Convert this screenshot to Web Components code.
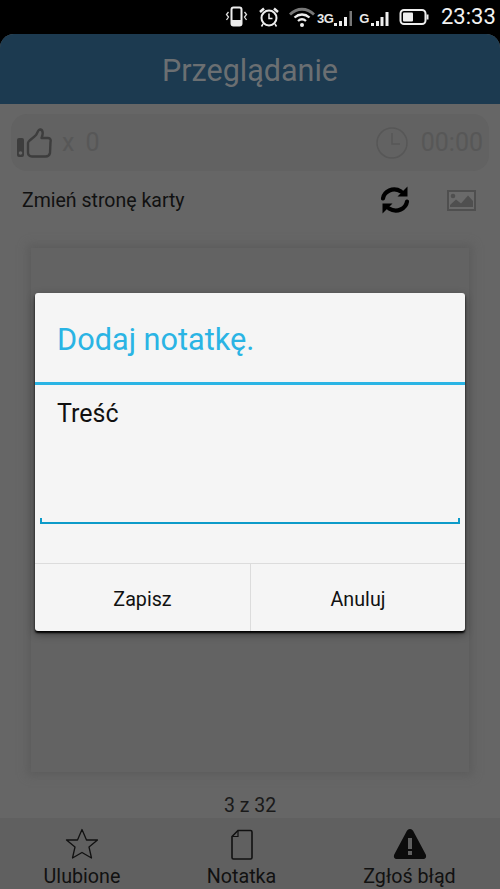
<!DOCTYPE html>
<html lang="pl">
<head>
<meta charset="utf-8">
<title>Przeglądanie</title>
<style>
html, body { margin: 0; padding: 0; width: 500px; height: 889px; overflow: hidden; background: #000; }
body { font-family: Roboto, "Noto Sans", sans-serif; }
</style>
</head>
<body>
<study-screen>
  <status-bar time="23:33"></status-bar>
  <title-bar>Przeglądanie</title-bar>
  <info-bar></info-bar>
  <side-row>Zmień stronę karty</side-row>
  <flash-card></flash-card>
  <page-count>3 z 32</page-count>
  <bottom-nav></bottom-nav>
  <note-dialog heading="Dodaj notatkę." placeholder="Treść" save="Zapisz" cancel="Anuluj"></note-dialog>
</study-screen>

<script>
// small helper so every element does the same shadow setup
function shadow(el, html) {
    const root = el.attachShadow({ mode: 'open' });
    const template = document.createElement('template');
    template.innerHTML = html;
    root.appendChild(template.content.cloneNode(true));
    return root;
}

class StudyScreen extends HTMLElement {
    connectedCallback() {
        shadow(this, `
            <style>
                :host{display: flex; flex-direction: column; position: relative; width: 500px; height: 889px; background: #000; overflow: hidden;}
                .page{flex: 1; display: flex; flex-direction: column; min-height: 0; background: #666; border-radius: 14px 14px 0 0;}
            </style>
            <slot name="top"></slot>
            <div class="page"><slot></slot></div>
        `);
        this.querySelector('status-bar').slot = 'top';
    }
}

class StatusBar extends HTMLElement {
    connectedCallback() {
        shadow(this, `
            <style>
                :host{display: flex; align-items: center; height: 34px; flex: none; background: #000; color: #eee; position: relative;}
                svg{display: block; flex: none;}
                .icons{display: flex; align-items: center; margin-left: 225px; height: 34px;}
                .time{margin-left: 12px; font: 400 22px/34px Roboto, sans-serif; color: #f2f2f2;}
                .net{font: 700 13px/13px "Liberation Sans", sans-serif; color: #e8e8e8; letter-spacing: -0.5px; margin-top: 3px;}
            </style>
            <div class="icons">
                <svg width="23" height="22" viewBox="0 0 23 22" style="margin-right:10px">
                    <rect x="6.500" y="1.500" width="10" height="18" rx="2" fill="none" stroke="#eee" stroke-width="2"/>
                    <rect x="7" y="14" width="9" height="5" fill="#eee"/>
                    <path d="M3.500 6 1.500 8.500 3.500 11 1.500 14M19.500 6 21.500 8.500 19.500 11 21.500 14" fill="none" stroke="#ddd" stroke-width="1.300"/>
                </svg>
                <svg width="22" height="22" viewBox="0 0 22 22" style="margin-right:9px">
                    <circle cx="11" cy="12" r="7.500" fill="none" stroke="#eee" stroke-width="2"/>
                    <path d="M11 7.500V12.500H14.500" fill="none" stroke="#eee" stroke-width="1.500"/>
                    <path d="M2 6 6 2.500M20 6 16 2.500" stroke="#eee" stroke-width="2.500"/>
                    <path d="M5 18 3.500 20.500M17 18 18.500 20.500" stroke="#eee" stroke-width="1.500"/>
                </svg>
                <svg width="26" height="22" viewBox="0 0 26 22">
                    <path d="M1 8.500C8 1.500 18 1.500 25 8.500" fill="none" stroke="#777" stroke-width="2.800"/>
                    <path d="M5.500 11.500C10 7.500 16 7.500 20.500 11.500" fill="none" stroke="#eee" stroke-width="2.300"/>
                    <path d="M9 15C11.500 12.800 14.500 12.800 17 15" fill="none" stroke="#eee" stroke-width="2.300"/>
                    <circle cx="13" cy="19" r="2" fill="#eee"/>
                </svg>
                <span class="net" style="margin-left:2px">3G</span>
                <svg width="21" height="22" viewBox="0 0 21 22">
                    <path d="M1 17h3v3H1zM6 15h3v5H6zM11 11h3v9h-3z" fill="#eee"/>
                    <path d="M16.500 5h2.500v15h-2.500z" fill="#777"/>
                </svg>
                <span class="net" style="margin-left:5px">G</span>
                <svg width="21" height="22" viewBox="0 0 21 22" style="margin-left:1px">
                    <path d="M1 17h3v3H1zM6 15h3v5H6zM10.500 11h3v9h-3zM15.500 6h3v14h-3z" fill="#eee"/>
                </svg>
                <svg width="30" height="20" viewBox="0 0 30 20" style="margin-left:8px">
                    <rect x="1.500" y="3" width="25" height="14" rx="3.500" fill="none" stroke="#eee" stroke-width="2"/>
                    <rect x="4" y="5.500" width="10" height="9" rx="1" fill="#eee"/>
                    <rect x="27.500" y="7.500" width="2" height="5" fill="#eee"/>
                </svg>
                <span class="time">${this.getAttribute('time')}</span>
            </div>
        `);
    }
}

class TitleBar extends HTMLElement {
    connectedCallback() {
        shadow(this, `
            <style>
                :host{display: flex; flex: none; align-items: center; justify-content: center; height: 70px; box-sizing: border-box; padding-top: 3px; background: #1c3a50; border-radius: 14px 14px 0 0; color: #6b6f72; font: 400 30.5px Roboto, sans-serif;}
            </style>
            <slot></slot>
        `);
    }
}

class InfoBar extends HTMLElement {
    connectedCallback() {
        shadow(this, `
            <style>
                :host{display: flex; flex: none; align-items: center; height: 57px; margin: 10px 11px 0; padding: 0 6px 0 6px; background: #626262; border-radius: 16px; color: #575757; font: 400 25px Roboto, sans-serif; box-sizing: border-box;}
                svg{display: block; flex: none;}
                .likes{margin-left: 9px;}
                .x{margin-right: 11px;}
                .spacer{flex: 1;}
                .time{margin-left: 13px;}
            </style>
            <svg width="36" height="30" viewBox="0 0 36 30">
                <rect x="0" y="10" width="7" height="19" rx="2" fill="#3d3d3d"/>
                <circle cx="3.500" cy="25" r="1.800" fill="#666"/>
                <path d="M11 15C11 12.500 16 10.500 19 7C20.500 5 21 1 23.500 1.500C27 2.500 25.500 8 24.500 10H31C33.500 10 34 12 33.500 14L33 25C32.500 27.500 31 28.500 28.500 28.500H15C12.500 28.500 11 27 11 24.500Z" fill="none" stroke="#3d3d3d" stroke-width="2.400" stroke-linejoin="round"/>
            </svg>
            <span class="likes x">x</span><span>0</span>
            <span class="spacer"></span>
            <svg width="32" height="32" viewBox="0 0 32 32">
                <circle cx="16" cy="16" r="15" fill="none" stroke="#575757" stroke-width="1.500"/>
                <path d="M16 6V17H24" fill="none" stroke="#575757" stroke-width="1.500"/>
            </svg>
            <span class="time">00:00</span>
        `);
    }
}

class SideRow extends HTMLElement {
    connectedCallback() {
        shadow(this, `
            <style>
                :host{display: flex; flex: none; align-items: center; height: 58px; padding: 0 24px 0 22px; color: #111; font: 400 19.500px Roboto, sans-serif;}
                svg{display: block; flex: none;}
                .label{flex: 1;}
                .flip{margin-right: 37px;}
            </style>
            <span class="label"><slot></slot></span>
            <svg class="flip" width="30" height="30" viewBox="0 0 30 30">
                <path d="M3 13.500C4 6.500 13 1.500 21 6.500" fill="none" stroke="#000" stroke-width="4.200" stroke-linecap="round"/>
                <path d="M27 16.500C26 23.500 17 28.500 9 23.500" fill="none" stroke="#000" stroke-width="4.200" stroke-linecap="round"/>
                <path d="M27.500 1.500V11.500H17.500Z" fill="#000"/>
                <path d="M2.500 28.500V18.500H12.500Z" fill="#000"/>
            </svg>
            <svg width="29" height="21" viewBox="0 0 29 21">
                <rect x="0" y="0" width="29" height="21" fill="#4f4f4f"/>
                <rect x="2" y="2" width="25" height="17" fill="#6a6a6a"/>
                <circle cx="6" cy="6" r="2.300" fill="#4f4f4f"/>
                <path d="M3 17V15L9 9.500 14 13.500 21 5.500 26 11V17Z" fill="#4f4f4f"/>
            </svg>
        `);
    }
}

class FlashCard extends HTMLElement {
    connectedCallback() {
        shadow(this, `
            <style>
                :host{display: block; flex: none; height: 524px; margin: 19px 31px 0; background: #636363; box-shadow: 0 0 9px 3px #5c5c5c;}
            </style>
        `);
    }
}

class PageCount extends HTMLElement {
    connectedCallback() {
        shadow(this, `
            <style>
                :host{display: flex; flex: none; align-items: center; justify-content: center; height: 46px; box-sizing: border-box; padding-top: 20px; color: #1a1a1a; font: 400 19.500px Roboto, sans-serif;}
            </style>
            <slot></slot>
        `);
    }
}

class BottomNav extends HTMLElement {
    connectedCallback() {
        shadow(this, `
            <style>
                :host{display: grid; grid-template-columns: 164px 155px 181px; flex: 1; background: #606060; color: #111; font: 400 19.700px/22px Roboto, sans-serif;}
                .item{display: flex; flex-direction: column; align-items: center; padding-top: 10px;}
                svg{display: block; height: 32px;}
                span{margin-top: 6px; white-space: nowrap;}
            </style>
            <div class="item">
                <svg width="34" height="32" viewBox="0 0 34 32">
                    <path d="M17 1.500 21.500 12H32.500L24 19 26.500 30 17 24.500 7.500 30 10 19 1.500 12H12.500Z" fill="none" stroke="#111" stroke-width="1.300" stroke-linejoin="round"/>
                </svg>
                <span>Ulubione</span>
            </div>
            <div class="item">
                <svg width="24" height="32" viewBox="0 0 24 32">
                    <path d="M8 2.500H20.500C21.500 2.500 22 3 22 4V29.500C22 30.500 21.500 31 20.500 31H3.500C2.500 31 2 30.500 2 29.500V8.500Z" fill="none" stroke="#111" stroke-width="1.600"/>
                    <path d="M8 3V8.500H2.500" fill="none" stroke="#111" stroke-width="1.200"/>
                </svg>
                <span>Notatka</span>
            </div>
            <div class="item">
                <svg width="34" height="32" viewBox="0 0 34 32">
                    <path d="M17 1C19 1 20 2.500 21 4.500L32.500 26C34 29 32.500 31 30 31H4C1.500 31 0 29 1.500 26L13 4.500C14 2.500 15 1 17 1Z" fill="#0c0c0c"/>
                    <rect x="15" y="10" width="4" height="11" fill="#606060"/>
                    <rect x="15" y="23" width="4" height="4" fill="#606060"/>
                </svg>
                <span>Zgłoś błąd</span>
            </div>
        `);
    }
}

class NoteDialog extends HTMLElement {
    connectedCallback() {
        shadow(this, `
            <style>
                /* lies over the dimmed screen, so this one is placed by hand */
                :host{position: absolute; left: 35px; top: 293px; width: 430px; height: 338px; display: flex; flex-direction: column; background: #f5f5f5; border-radius: 3px; box-shadow: 0 2px 2px #000, 0 3px 8px rgba(0,0,0,.4); font-family: Roboto, sans-serif;}
                .head{flex: none; height: 92px; box-sizing: border-box; border-bottom: 3px solid #2ab4e4; display: flex; align-items: center; padding: 3px 22px 0; color: #2ab4e4; font-size: 30.700px;}
                .body{flex: none; height: 179px; box-sizing: border-box; padding: 8px 5px 0; border-bottom: 1px solid #dcdcdc;}
                .field{height: 131px; box-sizing: border-box; padding: 5px 17px 0; color: #111; font-size: 25px; line-height: 32px; position: relative;}
                /* underline with the two little ticks at its ends */
                .field::after{content: ""; position: absolute; left: 0; right: 0; bottom: 0; height: 6px; box-sizing: border-box; border: 2.500px solid #0d9bc9; border-top: 0;}
                .actions{flex: 1; display: grid; grid-template-columns: 215px 1fr; color: #111; font-size: 19.700px;}
                .actions div{display: flex; align-items: center; justify-content: center; padding-top: 3px;}
                .actions div + div{border-left: 1px solid #dcdcdc;}
            </style>
            <div class="head">${this.getAttribute('heading')}</div>
            <div class="body"><div class="field">${this.getAttribute('placeholder')}</div></div>
            <div class="actions">
                <div>${this.getAttribute('save')}</div>
                <div>${this.getAttribute('cancel')}</div>
            </div>
        `);
    }
}

customElements.define('study-screen', StudyScreen);
customElements.define('status-bar', StatusBar);
customElements.define('title-bar', TitleBar);
customElements.define('info-bar', InfoBar);
customElements.define('side-row', SideRow);
customElements.define('flash-card', FlashCard);
customElements.define('page-count', PageCount);
customElements.define('bottom-nav', BottomNav);
customElements.define('note-dialog', NoteDialog);
</script>
</body>
</html>
